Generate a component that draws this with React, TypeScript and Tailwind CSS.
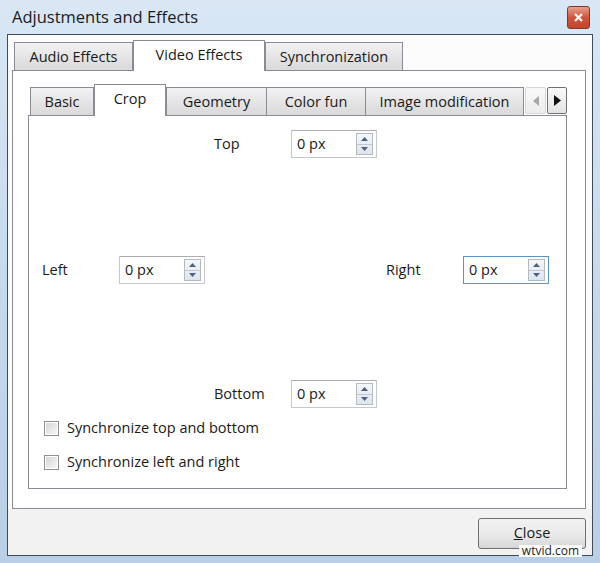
import React from "react";

const font = { fontFamily: '"Open Sans", "Noto Sans", "Liberation Sans", sans-serif' };

function Spin({ focused }: { focused?: boolean }) {
  return (
    <div
      className={
        "flex h-[28px] w-[86px] items-center border bg-white " +
        (focused ? "border-[#5c93c6]" : "border-[#c5c8cd] border-t-[#abadb3]")
      }
    >
      <span className="flex-1 pl-[5px] text-[14.5px] text-[#1a1a1a]">0 px</span>
      <div className="mr-[3px] flex h-[22px] w-[17px] flex-col border border-[#b5b9c0] bg-gradient-to-b from-[#f4f7fb] to-[#dde5ee]">
        <div className="flex flex-1 items-center justify-center border-b border-[#c3c8d0]">
          <svg width="7" height="4" viewBox="0 0 7 4">
            <path d="M0 4 L3.5 0 L7 4 Z" fill="#4d6185" />
          </svg>
        </div>
        <div className="flex flex-1 items-center justify-center">
          <svg width="7" height="4" viewBox="0 0 7 4">
            <path d="M0 0 L3.5 4 L7 0 Z" fill="#4d6185" />
          </svg>
        </div>
      </div>
    </div>
  );
}

function Pair({ label, focused }: { label: string; focused?: boolean }) {
  return (
    <div className="flex items-center">
      <span className="w-[77px] text-[14.5px] text-[#1a1a1a]">{label}</span>
      <Spin focused={focused} />
    </div>
  );
}

function Checkbox({ label }: { label: string }) {
  return (
    <div className="flex h-[20px] items-center">
      <div className="ml-[15px] flex h-[15px] w-[15px] items-center justify-center border border-[#8e8f8f] bg-white">
        <div className="h-[11px] w-[11px] bg-gradient-to-br from-[#d7d7d7] to-[#f6f6f6]" />
      </div>
      <span className="ml-[8px] text-[14.5px] text-[#1a1a1a]">{label}</span>
    </div>
  );
}

export default function App() {
  return (
    <div
      style={font}
      className="relative flex h-[563px] w-[600px] flex-col bg-gradient-to-b from-[#d9e7f5] via-[#c6d9ee] to-[#b8cfe7] px-[7px] pb-[7px]"
    >
      {/* Title bar */}
      <div className="flex h-[34px] items-center justify-between pl-[5px] pr-[3px]">
        <span className="text-[16.5px] text-[#1b1b1b]">Adjustments and Effects</span>
        <div className="flex h-[23px] w-[23px] items-center justify-center rounded-[3px] border border-[#7a3a2c] bg-gradient-to-b from-[#e8a08c] via-[#d0543b] to-[#c4452c]">
          <svg width="9" height="9" viewBox="0 0 9 9">
            <path d="M1 1 L8 8 M8 1 L1 8" stroke="white" strokeWidth="2.2" />
          </svg>
        </div>
      </div>

      {/* Client area */}
      <div className="flex flex-1 flex-col border border-[#3f4b58] bg-[#fcfcfc]">
        <div className="flex flex-col pl-[4px] pr-[6px] pt-[5px]">
          {/* Outer tabs */}
          <div className="flex h-[30px] items-end pl-[2px]">
            <div className="flex h-[28px] w-[119px] items-center justify-center border border-b-0 border-[#898c95] bg-gradient-to-b from-[#f2f2f2] to-[#d9d9d9] text-[14.5px] text-[#1a1a1a]">
              Audio Effects
            </div>
            <div className="relative z-10 -mb-px flex h-[31px] w-[132px] items-center justify-center border border-b-0 border-[#898c95] bg-white pb-[3px] text-[14.5px] text-[#1a1a1a]">
              Video Effects
            </div>
            <div className="flex h-[28px] w-[138px] items-center justify-center border border-b-0 border-[#898c95] bg-gradient-to-b from-[#f2f2f2] to-[#d9d9d9] text-[14.5px] text-[#1a1a1a]">
              Synchronization
            </div>
          </div>

          {/* Outer pane */}
          <div className="flex h-[439px] flex-col border border-[#898c95] bg-white pl-[15px] pr-[18px] pt-[13px]">
            {/* Inner tabs */}
            <div className="flex h-[31px] items-end pl-[2px]">
              <div className="flex h-[28px] w-[64px] items-center justify-center border border-b-0 border-[#898c95] bg-gradient-to-b from-[#f2f2f2] to-[#d9d9d9] text-[14.5px] text-[#1a1a1a]">
                Basic
              </div>
              <div className="relative z-10 -mb-px flex h-[32px] w-[72px] items-center justify-center border border-b-0 border-[#898c95] bg-white pb-[4px] text-[14.5px] text-[#1a1a1a]">
                Crop
              </div>
              <div className="flex h-[28px] w-[101px] items-center justify-center border border-b-0 border-[#898c95] bg-gradient-to-b from-[#f2f2f2] to-[#d9d9d9] text-[14.5px] text-[#1a1a1a]">
                Geometry
              </div>
              <div className="flex h-[28px] w-[99px] items-center justify-center border border-b-0 border-l-0 border-[#898c95] bg-gradient-to-b from-[#f2f2f2] to-[#d9d9d9] text-[14.5px] text-[#1a1a1a]">
                Color fun
              </div>
              <div className="flex h-[28px] w-[158px] items-center justify-center border border-b-0 border-l-0 border-[#898c95] bg-gradient-to-b from-[#f2f2f2] to-[#d9d9d9] text-[14.5px] text-[#1a1a1a]">
                Image modification
              </div>
              <div className="mb-[1px] ml-[1px] flex h-[27px] w-[21px] items-center justify-center rounded-[2px] border border-[#d4d6da] bg-gradient-to-b from-[#fafafa] to-[#ececec]">
                <svg width="6" height="10" viewBox="0 0 6 10">
                  <path d="M6 0 L0 5 L6 10 Z" fill="#a8a8a8" />
                </svg>
              </div>
              <div className="relative z-10 -mr-[3px] mb-[1px] ml-[1px] flex h-[27px] w-[20px] items-center justify-center rounded-[2px] border border-[#707070] bg-gradient-to-b from-[#fafafa] to-[#e4e4e4]">
                <svg width="7" height="11" viewBox="0 0 7 11">
                  <path d="M0 0 L7 5.5 L0 11 Z" fill="#111" />
                </svg>
              </div>
            </div>

            {/* Inner pane */}
            <div className="flex h-[374px] flex-col border border-[#898c95] bg-white pl-[13px] pt-[14px]">
              <div className="grid grid-cols-[163px_163px_163px] gap-x-[9px]">
                <div />
                <Pair label="Top" />
                <div />
              </div>
              <div className="mt-[98px] grid grid-cols-[163px_163px_163px] gap-x-[9px]">
                <Pair label="Left" />
                <div />
                <Pair label="Right" focused />
              </div>
              <div className="mt-[96px] grid grid-cols-[163px_163px_163px] gap-x-[9px]">
                <div />
                <Pair label="Bottom" />
                <div />
              </div>
              <div className="-ml-[13px] mt-[10px] flex flex-col gap-[14px]">
                <Checkbox label="Synchronize top and bottom" />
                <Checkbox label="Synchronize left and right" />
              </div>
            </div>
          </div>
        </div>

        {/* Footer */}
        <div className="flex flex-1 items-start justify-end bg-[#f2f2f2] pr-[6px] pt-[9px]">
          <div className="flex h-[31px] w-[108px] items-start justify-center rounded-[3px] border border-[#707070] bg-gradient-to-b from-[#f2f2f2] via-[#ebebeb] to-[#d6d6d6] pt-[6px] text-[14.5px] leading-[16px] text-[#1a1a1a]">
            <span>
              <span className="underline">C</span>lose
            </span>
          </div>
        </div>
      </div>

      <div className="absolute bottom-[6px] right-[18px] bg-white px-[3px] text-[12px] leading-[12px] text-[#222]">
        wtvid.com
      </div>
    </div>
  );
}
